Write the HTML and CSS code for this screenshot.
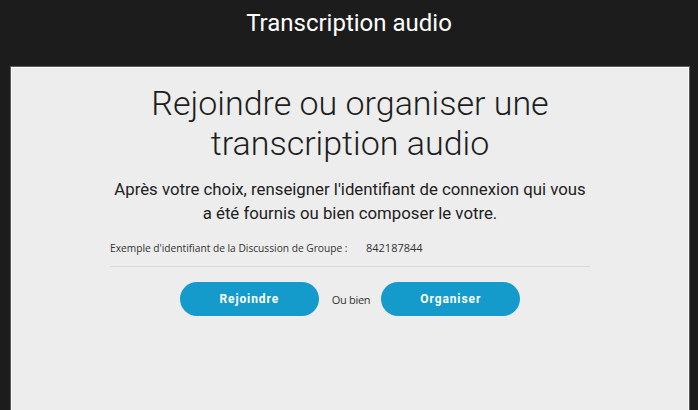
FILE: index.html
```html
<!DOCTYPE html>
<html lang="fr">
<head>
<meta charset="utf-8">
<title>Transcription audio</title>
<link rel="stylesheet" href="styles.css">
</head>
<body>
<header class="topbar">
  <h1 class="topbar-title">Transcription audio</h1>
</header>
<main class="panel">
  <h2 class="headline">Rejoindre ou organiser une<br>transcription audio</h2>
  <p class="lead">Après votre choix, renseigner l'identifiant de connexion qui vous<br>a été fournis ou bien composer le votre.</p>
  <div class="example">
    <span class="example-label">Exemple d'identifiant de la Discussion de Groupe :</span>
    <span class="example-value">842187844</span>
  </div>
  <div class="actions">
    <button class="btn" type="button">Rejoindre</button>
    <span class="or">Ou bien</span>
    <button class="btn" type="button">Organiser</button>
  </div>
</main>
</body>
</html>
```
FILE: styles.css
```css
html, body {
  margin: 0;
  padding: 0;
  height: 100%;
  overflow: hidden;
}
body {
  background: #1c1c1c;
  font-family: Roboto, "Liberation Sans", sans-serif;
}
.topbar {
  height: 66px;
  display: flex;
  align-items: flex-start;
  justify-content: center;
}
.topbar-title {
  margin: 8px 0 0;
  color: #ffffff;
  font-size: 24px;
  font-weight: 400;
  line-height: 30px;
}
.panel {
  box-sizing: border-box;
  margin: 0 8px 0 10px;
  height: calc(100vh - 66px);
  background: #ededed;
  border: 1px solid #5c5c5c;
  border-bottom: 0;
  box-shadow: inset 1px 1px 0 #fafafa, inset -1px 0 0 #fafafa;
  display: flex;
  flex-direction: column;
  align-items: center;
}
.headline {
  margin: 16px 0 0;
  font-size: 34px;
  font-weight: 300;
  line-height: 40px;
  color: #1e1e1e;
  text-align: center;
}
.lead {
  margin: 14px 0 0;
  font-size: 16.8px;
  line-height: 24px;
  color: #222;
  text-align: center;
}
.example {
  margin-top: 16px;
  width: 480px;
  box-sizing: border-box;
  padding: 0 0 11px;
  border-bottom: 1px solid #d9d9d9;
  display: flex;
  align-items: center;
  font-family: "Open Sans", sans-serif;
  font-size: 10.2px;
  line-height: 14px;
  color: #333;
}
.example-label {
  width: 256px;
}
.example-value {
  font-size: 11px;
}
.actions {
  margin-top: 15px;
  display: flex;
  align-items: center;
}
.btn {
  width: 139px;
  height: 34px;
  border: none;
  border-radius: 17px;
  background: #149bcc;
  color: #fff;
  font-family: Roboto, sans-serif;
  font-size: 12px;
  font-weight: 700;
  letter-spacing: 0.9px;
  padding: 0;
}
.or {
  margin: 0 11px 0 13px;
  font-family: "Open Sans", sans-serif;
  font-size: 11px;
  color: #333;
  letter-spacing: -0.3px;
}
```
